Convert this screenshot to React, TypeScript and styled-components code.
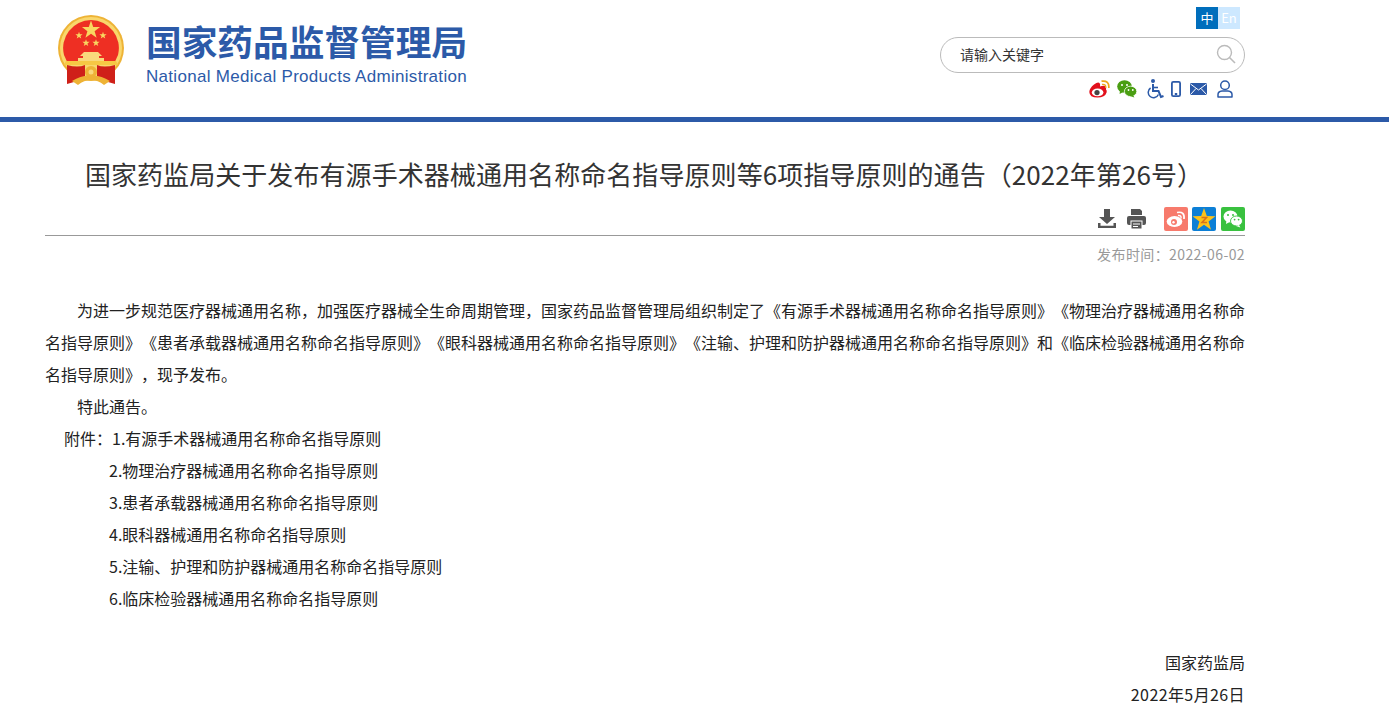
import React, { FC } from 'react'
import styled, { createGlobalStyle } from 'styled-components'

const BLUE = '#2c5aa8'
const BODY_FONT = '"Noto Sans CJK SC", "Liberation Sans", sans-serif'

const GlobalStyle = createGlobalStyle`
	html, body {
		margin: 0;
		padding: 0;
		height: 100%;
		overflow: hidden;
		background: #fff;
		font-family: ${BODY_FONT};
		text-spacing-trim: space-all;
	}
`

/////////STYLED/////////
const HeaderBar = styled.header`
	height: 117px;
	border-bottom: 5px solid ${BLUE};
	padding: 0 144px 0 58px;
	display: flex;
	justify-content: space-between;
`
const Brand = styled.div`
	display: flex;
	align-items: flex-start;
	gap: 22px;
	padding-top: 15px;
`
const BrandText = styled.div`
	display: flex;
	flex-direction: column;
	color: ${BLUE};
`
const BrandCn = styled.div`
	font-size: 35.7px;
	font-weight: 700;
	line-height: 36px;
	margin-top: 8px;
	white-space: nowrap;
`
const BrandEn = styled.div`
	font-family: 'Liberation Sans', sans-serif;
	font-size: 17px;
	line-height: 18px;
	letter-spacing: 0.3px;
	margin-top: 9px;
	white-space: nowrap;
`
const HeaderTools = styled.div`
	display: flex;
	flex-direction: column;
	align-items: flex-end;
	padding-top: 7px;
`
const LangSwitch = styled.div`
	display: flex;
	margin-right: 5px;
`
const LangItem = styled.div<{ $active?: boolean }>`
	width: 22px;
	height: 22px;
	line-height: 22px;
	text-align: center;
	font-size: 13px;
	color: #fff;
	background: ${(p) => (p.$active ? '#006ebc' : '#cde8ff')};
`
const SearchBox = styled.div`
	box-sizing: border-box;
	width: 305px;
	height: 36px;
	margin-top: 8px;
	padding: 0 8px 2px 19px;
	border: 1px solid #bbb;
	border-radius: 18px;
	display: flex;
	align-items: center;
	justify-content: space-between;
	font-size: 14px;
	color: #333;
`
const IconRow = styled.div`
	display: flex;
	align-items: center;
	height: 20px;
	margin-top: 6px;
	margin-right: 12px;
`
const HeadIcon = styled.svg<{ $gap?: number }>`
	display: block;
	margin-left: ${(p) => p.$gap ?? 0}px;
`
const Article = styled.main`
	width: 1200px;
	margin-left: 45px;
	color: #333;
`
const Title = styled.h1`
	margin: 0;
	padding: 33px 2px 0 0;
	font-size: 26px;
	font-weight: 400;
	line-height: 38px;
	letter-spacing: 0.07px;
	text-align: center;
	white-space: nowrap;
	color: #333;
`
const ActionBar = styled.div`
	display: flex;
	justify-content: flex-end;
	align-items: flex-start;
	height: 28px;
	margin-top: 14px;
	border-bottom: 1px solid #999;
`
const ShareIcon = styled.svg<{ $gap?: number; $top?: number }>`
	display: block;
	margin-left: ${(p) => p.$gap ?? 0}px;
	margin-top: ${(p) => p.$top ?? 0}px;
`
const PublishDate = styled.div`
	margin-top: 8px;
	font-size: 14px;
	line-height: 20px;
	letter-spacing: 0.4px;
	text-align: right;
	color: #999;
`
const Content = styled.div`
	margin-top: 30px;
	font-size: 16px;
	line-height: 32px;
	color: #222;
`
const Para = styled.p<{ $indent?: number; $align?: string }>`
	margin: 0;
	padding-left: ${(p) => p.$indent ?? 0}px;
	text-align: ${(p) => p.$align ?? 'left'};
	min-height: 32px;
`
const FirstPara = styled(Para)`
	text-indent: 32px;
	text-align: justify;
`
const SignDate = styled(Para)`
	letter-spacing: 0.4px;
`
/////////STYLED/////////

const starPoints = (cx: number, cy: number, r: number): string => {
	const pts: string[] = []
	for (let i = 0; i < 10; i++) {
		const rad = i % 2 === 0 ? r : r * 0.4
		const a = -Math.PI / 2 + (i * Math.PI) / 5
		pts.push(`${(cx + rad * Math.cos(a)).toFixed(2)},${(cy + rad * Math.sin(a)).toFixed(2)}`)
	}
	return pts.join(' ')
}

const Emblem: FC = () => (
	<svg width="66" height="70" viewBox="0 0 66 70">
		<circle cx="33" cy="33" r="33" fill="#eeb336" />
		<circle cx="33" cy="33" r="31" fill="#f9d76c" />
		<path d="M33 5 A28 28 0 0 1 60 40 Q58 46 54 50 H12 Q8 46 6 40 A28 28 0 0 1 33 5 Z" fill="#ee2f23" />
		<polygon points={starPoints(33, 15, 9.5)} fill="#f9d660" />
		<polygon points={starPoints(21, 20.5, 3.8)} fill="#f9d660" />
		<polygon points={starPoints(45, 20.5, 3.8)} fill="#f9d660" />
		<polygon points={starPoints(28, 28, 3.8)} fill="#f9d660" />
		<polygon points={starPoints(38, 28, 3.8)} fill="#f9d660" />
		<path d="M26 37 H40 L44 41 H41 V43 H46 V50 H20 V43 H25 V41 H22 Z" fill="#f9d97c" />
		<path d="M8 46 H58 L60 50 H6 Z" fill="#f6c844" />
		<path d="M9 50 Q20 53 27 50 L27 62 L16 67 L9 69 Z" fill="#cf2019" />
		<path d="M57 50 Q46 53 39 50 L39 62 L50 67 L57 69 Z" fill="#cf2019" />
		<path d="M14 66 Q24 60 33 61 Q42 60 52 66 L46 70 Q40 65 33 65 Q26 65 20 70 Z" fill="#eeb336" />
		<circle cx="33" cy="57" r="6" fill="#eeb336" />
		<circle cx="33" cy="57" r="2.5" fill="#f9d97c" />
	</svg>
)

const WeiboHead: FC = () => (
	<HeadIcon width="21" height="18" viewBox="0 0 21 18">
		<path d="M0.3 12 Q0.5 8 5 4.5 Q9 1.5 10.5 3 Q11.5 4 11 6.5 Q15 5 16.5 6.5 Q17.5 8 17 9.5 Q18.2 10.5 17.6 12.5 Q16 17.6 8.5 17.6 Q0.5 17.5 0.3 12 Z" fill="#e2101c" />
		<ellipse cx="8.6" cy="12.4" rx="5.8" ry="3.9" fill="#fff" />
		<circle cx="8" cy="12.6" r="2.6" fill="#444" />
		<path d="M12.5 1.2 Q20.5 0 19.8 8" fill="none" stroke="#eda71a" strokeWidth="1.7" />
		<path d="M13 4.4 Q17.2 3.8 16.8 8" fill="none" stroke="#eda71a" strokeWidth="1.4" />
	</HeadIcon>
)

const WechatHead: FC = () => (
	<HeadIcon $gap={7} width="20" height="18" viewBox="0 0 20 18">
		<ellipse cx="7.5" cy="6.5" rx="7.3" ry="6.2" fill="#4a9e12" />
		<path d="M3 10 L2.6 14 L7 11.5 Z" fill="#4a9e12" />
		<ellipse cx="13.6" cy="11.4" rx="6.2" ry="5.2" fill="#4a9e12" stroke="#fff" strokeWidth="0.8" />
		<path d="M16 15 L17.4 17.6 L13 16 Z" fill="#4a9e12" />
		<circle cx="5" cy="5" r="1" fill="#fff" />
		<circle cx="10" cy="5" r="1" fill="#fff" />
		<circle cx="11.5" cy="10" r="0.9" fill="#fff" />
		<circle cx="15.8" cy="10" r="0.9" fill="#fff" />
	</HeadIcon>
)

const AccessHead: FC = () => (
	<HeadIcon $gap={9} width="18" height="20" viewBox="0 0 18 20">
		<circle cx="7" cy="2" r="2" fill={BLUE} />
		<path d="M7 5 V12 H12.5 L15 18 L17.5 17" fill="none" stroke={BLUE} strokeWidth="2" />
		<path d="M7 8.5 H12" fill="none" stroke={BLUE} strokeWidth="1.6" />
		<path d="M4.6 9 A5.3 5.3 0 1 0 12.4 15.5" fill="none" stroke={BLUE} strokeWidth="1.5" />
	</HeadIcon>
)

const PhoneHead: FC = () => (
	<HeadIcon $gap={7} width="10" height="16" viewBox="0 0 10 16">
		<rect x="0.9" y="0.9" width="8.2" height="14.2" rx="1.4" fill="none" stroke={BLUE} strokeWidth="1.8" />
		<rect x="3.8" y="12" width="2.4" height="2" fill={BLUE} />
	</HeadIcon>
)

const MailHead: FC = () => (
	<HeadIcon $gap={9} width="17" height="12" viewBox="0 0 17 12">
		<rect width="17" height="12" rx="1" fill={BLUE} />
		<path d="M0.5 1 L8.5 7 L16.5 1 M0.5 11.5 L6 5.5 M16.5 11.5 L11 5.5" fill="none" stroke="#fff" strokeWidth="1" />
	</HeadIcon>
)

const UserHead: FC = () => (
	<HeadIcon $gap={10} width="16" height="18" viewBox="0 0 16 18">
		<circle cx="8" cy="5.2" r="4.3" fill="none" stroke={BLUE} strokeWidth="1.5" />
		<path d="M1 17 V14.5 Q1 11.5 5 11 H11 Q15 11.5 15 14.5 V17 Z" fill="none" stroke={BLUE} strokeWidth="1.5" strokeLinejoin="round" />
	</HeadIcon>
)

const App: FC = () => (
	<>
		<GlobalStyle />
		<HeaderBar>
			<Brand>
				<Emblem />
				<BrandText>
					<BrandCn>国家药品监督管理局</BrandCn>
					<BrandEn>National Medical Products Administration</BrandEn>
				</BrandText>
			</Brand>
			<HeaderTools>
				<LangSwitch>
					<LangItem $active>中</LangItem>
					<LangItem>En</LangItem>
				</LangSwitch>
				<SearchBox>
					<span>请输入关键字</span>
					<svg width="20" height="20" viewBox="0 0 20 20">
						<circle cx="8.5" cy="8.5" r="7" fill="none" stroke="#bbb" strokeWidth="1.4" />
						<path d="M13.5 13.5 L19 19" stroke="#bbb" strokeWidth="1.6" />
					</svg>
				</SearchBox>
				<IconRow>
					<WeiboHead />
					<WechatHead />
					<AccessHead />
					<PhoneHead />
					<MailHead />
					<UserHead />
				</IconRow>
			</HeaderTools>
		</HeaderBar>
		<Article>
			<Title>国家药监局关于发布有源手术器械通用名称命名指导原则等6项指导原则的通告（2022年第26号）</Title>
			<ActionBar>
				<ShareIcon $top={2} width="18" height="20" viewBox="0 0 18 20">
					<path d="M6 0 H12 V8 H17 L9 15 L1 8 H6 Z" fill="#555" />
					<path d="M0 14 V19 H18 V14 H15.5 V16.8 H2.5 V14 Z" fill="#555" />
				</ShareIcon>
				<ShareIcon $gap={11} $top={2} width="19" height="20" viewBox="0 0 19 20">
					<path d="M4 0 H13 L15 2 V6 H4 Z" fill="#555" />
					<rect y="7" width="19" height="9" rx="2" fill="#555" />
					<rect x="4" y="12" width="11" height="8" fill="#555" stroke="#fff" strokeWidth="1" />
					<path d="M6 15 H13 M6 17.5 H11" stroke="#fff" strokeWidth="1" />
				</ShareIcon>
				<ShareIcon $gap={18} width="24" height="24" viewBox="0 0 24 24">
					<rect width="24" height="24" rx="2" fill="#f77a6c" />
					<ellipse cx="10.5" cy="14.5" rx="7.8" ry="5.4" fill="#fff" />
					<circle cx="10" cy="15" r="3" fill="#f77a6c" />
					<circle cx="9.5" cy="15.3" r="1.2" fill="#fff" />
					<path d="M13 5.5 Q21 4 20 12" fill="none" stroke="#fff" strokeWidth="1.7" />
					<path d="M14 8.5 Q17.6 8 17 11.5" fill="none" stroke="#fff" strokeWidth="1.4" />
				</ShareIcon>
				<ShareIcon $gap={4} width="24" height="24" viewBox="0 0 24 24">
					<rect width="24" height="24" rx="2" fill="#0c7fd6" />
					<polygon points={starPoints(12, 13, 12)} fill="#fcc21b" />
					<path d="M9.5 10.5 H14.5 L10 15.5 H15" fill="none" stroke="#d9731a" strokeWidth="1.6" />
				</ShareIcon>
				<ShareIcon $gap={5} width="24" height="24" viewBox="0 0 24 24">
					<rect width="24" height="24" rx="2" fill="#39c13f" />
					<ellipse cx="9.5" cy="9.5" rx="7" ry="6" fill="#fff" />
					<path d="M5.5 13 L5 17 L9.5 14.5 Z" fill="#fff" />
					<ellipse cx="15.5" cy="14" rx="6" ry="5" fill="#fff" stroke="#39c13f" strokeWidth="0.9" />
					<path d="M18 18 L19.4 20.4 L15 19 Z" fill="#fff" />
					<circle cx="7" cy="8" r="1" fill="#39c13f" />
					<circle cx="12" cy="8" r="1" fill="#39c13f" />
					<circle cx="13.6" cy="12.6" r="0.9" fill="#39c13f" />
					<circle cx="17.6" cy="12.6" r="0.9" fill="#39c13f" />
				</ShareIcon>
			</ActionBar>
			<PublishDate>发布时间：2022-06-02</PublishDate>
			<Content>
				<FirstPara>
					为进一步规范医疗器械通用名称，加强医疗器械全生命周期管理，国家药品监督管理局组织制定了《有源手术器械通用名称命名指导原则》《物理治疗器械通用名称命名指导原则》《患者承载器械通用名称命名指导原则》《眼科器械通用名称命名指导原则》《注输、护理和防护器械通用名称命名指导原则》和《临床检验器械通用名称命名指导原则》，现予发布。
				</FirstPara>
				<Para $indent={32}>特此通告。</Para>
				<Para $indent={19}>附件：1.有源手术器械通用名称命名指导原则</Para>
				<Para $indent={64}>2.物理治疗器械通用名称命名指导原则</Para>
				<Para $indent={64}>3.患者承载器械通用名称命名指导原则</Para>
				<Para $indent={64}>4.眼科器械通用名称命名指导原则</Para>
				<Para $indent={64}>5.注输、护理和防护器械通用名称命名指导原则</Para>
				<Para $indent={64}>6.临床检验器械通用名称命名指导原则</Para>
				<Para />
				<Para $align="right">国家药监局</Para>
				<SignDate $align="right">2022年5月26日</SignDate>
			</Content>
		</Article>
	</>
)

export default App
